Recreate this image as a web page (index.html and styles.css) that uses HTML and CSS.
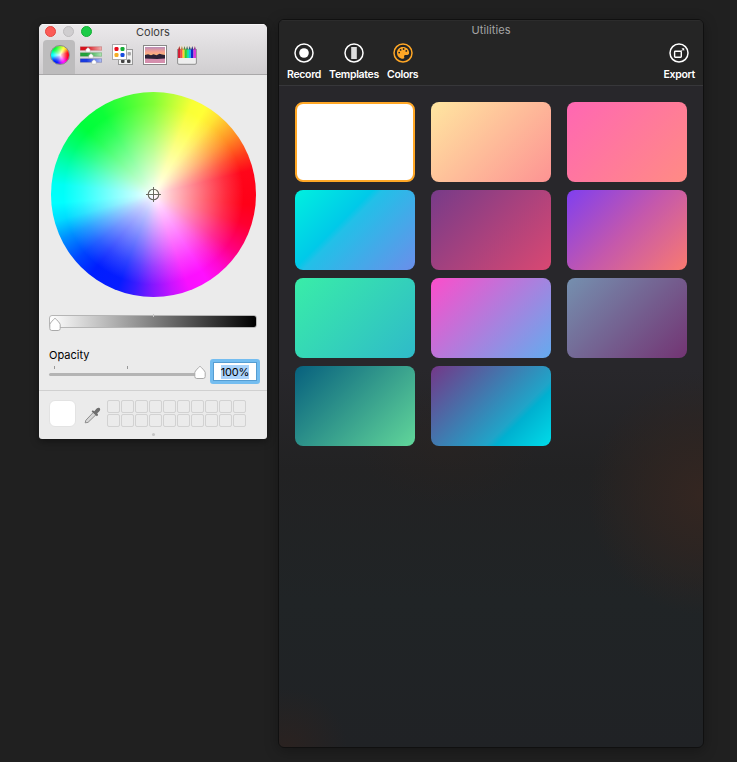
FILE: index.html
```html
<!DOCTYPE html>
<html lang="en">
<head>
<meta charset="utf-8">
<title>Utilities</title>
<link rel="stylesheet" href="styles.css">
</head>
<body>
<section class="picker">
  <header class="picker-head">
    <div class="titlebar">
      <span class="lights"><i class="light close"></i><i class="light idle"></i><i class="light zoom"></i></span>
      <span class="picker-title">Colors</span>
    </div>
    <nav class="tabs">
      <span class="tab selected"><i class="mini-wheel"></i></span>
      <span class="tab">
        <svg width="24" height="20" viewBox="0 0 24 20">
          <defs>
            <linearGradient id="red"><stop offset=".3" stop-color="#d8121d"/><stop offset="1" stop-color="#f0b4b2"/></linearGradient>
            <linearGradient id="green"><stop offset=".3" stop-color="#22a23c"/><stop offset="1" stop-color="#b4e6b8"/></linearGradient>
            <linearGradient id="blue"><stop offset=".3" stop-color="#1a3be0"/><stop offset="1" stop-color="#b4c4f6"/></linearGradient>
          </defs>
          <rect x="1.300" y="1.800" width="21.400" height="3.400" fill="url(#red)" stroke="#a33" stroke-opacity=".5" stroke-width=".6"/>
          <rect x="1.300" y="7.800" width="21.400" height="3.400" fill="url(#green)" stroke="#383" stroke-opacity=".5" stroke-width=".6"/>
          <rect x="1.300" y="13.800" width="21.400" height="3.400" fill="url(#blue)" stroke="#338" stroke-opacity=".5" stroke-width=".6"/>
          <g fill="#fff" stroke="#aaa" stroke-width=".4"><path d="M9 2.500l2.200 2v2.500H6.800V4.500z"/><path d="M12 8.500l2.200 2v2.500H9.800v-2.500z"/><path d="M15 14.500l2.200 2v2.500h-4.400v-2.500z"/></g>
        </svg>
      </span>
      <span class="tab">
        <svg width="24" height="22" viewBox="0 0 24 22">
          <rect x="7.500" y="5.500" width="14" height="15" fill="#f2f2f2" stroke="#999"/>
          <g fill="#444"><rect x="16.500" y="8" width="3.500" height="3.500" rx="1" fill="#aaa"/><rect x="10" y="15.500" width="3.500" height="3.500" rx="1"/><rect x="16" y="15.500" width="3.500" height="3.500" rx="1"/></g>
          <rect x="1.500" y=".5" width="14" height="15" fill="#fff" stroke="#aaa"/>
          <rect x="3.500" y="3" width="4" height="4" rx="1.300" fill="#e80c1c"/><rect x="9.500" y="3" width="4" height="4" rx="1.300" fill="#14ad35"/>
          <rect x="3.500" y="9" width="4" height="4" rx="1.300" fill="#f6ae25"/><rect x="9.500" y="9" width="4" height="4" rx="1.300" fill="#174bdd"/>
        </svg>
      </span>
      <span class="tab">
        <svg width="24" height="20" viewBox="0 0 24 20">
          <defs><linearGradient id="sky" x2="0" y2="1"><stop stop-color="#b98cb8"/><stop offset=".5" stop-color="#f7a18e"/><stop offset="1" stop-color="#f8c36b"/></linearGradient></defs>
          <rect x=".5" y=".5" width="23" height="19" fill="#fff" stroke="#888"/>
          <rect x="2" y="2" width="20" height="10" fill="url(#sky)"/>
          <rect x="2" y="12" width="20" height="6" fill="#d58fad"/>
          <path d="M2 10l3-.8 3 1 2.500-1 3 1 3-1.400 2.500.8 3 .4v3.400l-8 .7-12-.6z" fill="#2b2136"/>
        </svg>
      </span>
      <span class="tab">
        <svg width="20" height="20" viewBox="0 0 20 20">
          <path d="M1 .5h18V5H1z" fill="#e6e0d8"/>
          <g><path d="M1 5l1.300-4 1.300 4z" fill="#a33"/><path d="M3.600 5l1.300-4 1.300 4z" fill="#b84"/><path d="M6.200 5l1.300-4 1.300 4z" fill="#584"/><path d="M8.800 5l1.300-4 1.300 4z" fill="#476"/><path d="M11.400 5l1.300-4 1.300 4z" fill="#357"/><path d="M14 5l1.300-4 1.300 4z" fill="#338"/><path d="M16.600 5l1.300-4L19 5z" fill="#838"/></g>
          <g><rect x="1" y="4.500" width="2.600" height="9" fill="#d71c33"/><rect x="3.600" y="4.500" width="2" height="9" fill="#f34f45"/><rect x="5.600" y="4.500" width="2" height="9" fill="#ffd52b"/><rect x="7.600" y="4.500" width="2.300" height="9" fill="#35cf2c"/><rect x="9.900" y="4.500" width="2" height="9" fill="#12e59b"/><rect x="11.900" y="4.500" width="2" height="9" fill="#13baf3"/><rect x="13.900" y="4.500" width="2.600" height="9" fill="#1721c8"/><rect x="16.500" y="4.500" width="2.500" height="9" fill="#df35dd"/></g>
          <path d="M.7 13h18.600v5q0 1-1 1H1.700q-1 0-1-1z" fill="#eee"/><path d="M.6 4v14q0 1.300 1.300 1.300h16.200q1.300 0 1.300-1.300V4" fill="none" stroke="#888" stroke-width=".9"/>
        </svg>
      </span>
    </nav>
  </header>
  <div class="picker-body">
    <div class="wheel">
      <svg width="15" height="15" viewBox="0 0 15 15" fill="none" stroke="#6a6a60"><circle cx="7.500" cy="7.500" r="5.300" stroke-width="1.100"/><path d="M7.500 0v15M0 7.500h15"/></svg>
    </div>
    <div class="brightness">
      <svg class="thumb" width="14" height="15" viewBox="0 0 14 15"><path d="M7 1.200C8 2.300 12.200 6 12.200 7.500v4q0 2-2 2H3.800q-2 0-2-2v-4C1.800 6 6 2.300 7 1.200z" fill="#fff" stroke="#a9a9a9"/></svg>
    </div>
    <div class="opacity-row">
      <div class="opacity">
        <span class="opacity-label">Opacity</span>
        <div class="ticks"><i></i><i></i></div>
        <div class="track">
          <svg class="thumb" width="14" height="15" viewBox="0 0 14 15"><path d="M7 1.200C8 2.300 12.200 6 12.200 7.500v4q0 2-2 2H3.800q-2 0-2-2v-4C1.800 6 6 2.300 7 1.200z" fill="#fff" stroke="#a9a9a9"/></svg>
        </div>
      </div>
      <div class="field"><span>100%</span></div>
    </div>
  </div>
  <footer class="picker-foot">
    <div class="current"></div>
    <svg class="dropper" width="17" height="17" viewBox="0 0 17 17">
      <path d="M1.200 15.800l.6-2.500 7.600-8 2.600 2.400-8 7.700z" fill="#d6d6d6" stroke="#858585" stroke-width=".9"/>
      <path d="M7.600 4.400l1.100-1.100 1.600 1C11.800 2.300 13.200.7 14.700.8c1.400.1 1.900 1.500 1.200 2.600-.6 1-1.700 1.800-2.700 2.900l1 1.700-1.300 1.200z" fill="#6e6e6e"/>
    </svg>
    <div class="wells"><i></i><i></i><i></i><i></i><i></i><i></i><i></i><i></i><i></i><i></i><i></i><i></i><i></i><i></i><i></i><i></i><i></i><i></i><i></i><i></i></div>
    <i class="grip"></i>
  </footer>
</section>

<section class="utilities">
  <header class="util-head">
    <h1>Utilities</h1>
    <nav class="tools">
      <span class="tool record">
        <svg width="20" height="20" viewBox="0 0 20 20"><circle cx="10" cy="10" r="9" fill="none" stroke="currentColor" stroke-width="1.500"/><circle cx="10" cy="10" r="4.800" fill="currentColor"/></svg>
        <b>Record</b>
      </span>
      <span class="tool templates">
        <svg width="20" height="20" viewBox="0 0 20 20"><circle cx="10" cy="10" r="9" fill="none" stroke="currentColor" stroke-width="1.500"/><rect x="7.200" y="4" width="5.600" height="12" fill="#dcdcdc"/></svg>
        <b>Templates</b>
      </span>
      <span class="tool colors">
        <svg width="20" height="20" viewBox="0 0 20 20"><circle cx="10" cy="10" r="9" fill="none" stroke="#ffa726" stroke-width="1.500"/><path d="M9.900 4C6.400 4 4 6.500 4 9.700c0 3.500 2.700 6 6 6 1.100 0 1.500-.8 1.200-1.700-.4-1.200 0-2 1.200-2h1.700c1.400 0 2-.9 2-2.200C16.100 6.400 13.300 4 9.900 4z" fill="#ffa726"/><g fill="#252525"><circle cx="6.200" cy="9.600" r=".9"/><circle cx="7.600" cy="6.900" r=".9"/><circle cx="10.600" cy="6" r=".9"/><circle cx="13.300" cy="7.900" r=".9"/></g></svg>
        <b>Colors</b>
      </span>
      <span class="tool export">
        <svg width="20" height="20" viewBox="0 0 20 20"><circle cx="10" cy="10" r="9" fill="none" stroke="currentColor" stroke-width="1.500"/><rect x="5.600" y="8.200" width="6.700" height="6.100" rx=".7" fill="none" stroke="currentColor" stroke-width="1.400"/><path d="M12.500 5.200h2.700v2.700z" fill="currentColor"/><path d="M12.500 7.900l1.700-1.700" stroke="currentColor"/></svg>
        <b>Export</b>
      </span>
    </nav>
  </header>
  <div class="gallery">
    <div class="card white"></div><div class="card peach"></div><div class="card rose"></div>
    <div class="card aqua"></div><div class="card plum"></div><div class="card sunset"></div>
    <div class="card mint"></div><div class="card candy"></div><div class="card dusk"></div>
    <div class="card forest"></div><div class="card lagoon"></div>
  </div>
</section>
</body>
</html>
```
FILE: styles.css
```css
* { box-sizing: border-box; }
body {
  margin: 0;
  width: 737px;
  height: 762px;
  overflow: hidden;
  background: #202020;
  font-family: Inter, "Liberation Sans", sans-serif;
  font-size: 11px;
  display: flex;
  align-items: flex-start;
  gap: 11px;
  padding: 19px 0 0 39px;
}
svg { display: block; }
i { display: block; }

.picker {
  width: 228px;
  height: 415px;
  margin-top: 5px;
  border-radius: 5px 5px 3px 3px;
  overflow: hidden;
  background: #ebebeb;
  color: #000;
  box-shadow: 0 2px 9px rgba(0, 0, 0, .45);
  display: flex;
  flex-direction: column;
}
.picker-head {
  height: 51px;
  background: linear-gradient(#ebe9eb, #d0ced0);
  border-bottom: 1px solid #a9a8a9;
  box-shadow: inset 0 1px #f6f5f6;
}
.titlebar { height: 16px; display: grid; grid-template-columns: 54px 1fr 54px; align-items: center; }
.lights { display: flex; gap: 7px; padding: 0 0 1px 6px; }
.light { width: 11px; height: 11px; flex: none; border-radius: 50%; border: 1px solid; }
.close { background: #fc5b57; border-color: #e2463f; }
.idle { background: #d0ced0; border-color: #bdbbbd; }
.zoom { background: #1ccb47; border-color: #14ae35; }
.picker-title { text-align: center; line-height: 16px; color: #3c3c3c; }
.tabs { display: flex; padding-left: 4px; height: 34px; }
.tab { width: 32px; height: 34px; display: flex; align-items: center; justify-content: center; padding-bottom: 4px; }
.tab.selected { background: #bdbcbd; border-radius: 4px 4px 0 0; }
.wheel, .mini-wheel {
  border-radius: 50%;
  background:
    radial-gradient(closest-side, #fff 0, rgba(255, 255, 255, .76) 18%, rgba(255, 255, 255, .42) 48%, rgba(255, 255, 255, .17) 70%, rgba(255, 255, 255, 0) 88%),
    conic-gradient(#80ff36 0, #c4ff38 13deg, #f8ff36 23deg, #ffff36 31deg, #ffe234 39deg, #ff8c24 54deg, #ff3c1c 66deg, #ff061a 76deg, #ff0018 96deg, #ff0030 108deg, #ff0080 125deg, #ff08d0 137deg, #ff10ff 148deg, #f810ff 159deg, #c814ff 169deg, #8018ff 181deg, #3a1cff 191deg, #061cff 201deg, #001eff 218deg, #0044ff 230deg, #0090ff 244deg, #00dcff 255deg, #00ffff 265deg, #00fff4 276deg, #00ffb8 288deg, #00ff70 301deg, #00ff3c 314deg, #0cff38 328deg, #40ff36 343deg, #80ff36 360deg);
}
.mini-wheel { width: 20px; height: 20px; margin-left: 1px; border: 1px solid #8b8b8b; }

.picker-body { padding: 17px 10px 0 10px; height: 315px; }
.wheel { width: 205px; height: 205px; margin-left: 2px; display: grid; place-items: center; }
.brightness {
  position: relative;
  width: 208px;
  height: 13px;
  margin-top: 18px;
  border: 1px solid #b5b5b5;
  border-radius: 3px;
  background: linear-gradient(90deg, #fff, #000);
}
.brightness::before { content: ""; position: absolute; left: 103px; top: -2px; width: 1px; height: 3px; background: #c9c9c9; }
.thumb { position: absolute; }
.brightness .thumb { left: -2px; top: 1px; }
.opacity-row { display: flex; margin-top: 20px; }
.opacity { width: 161px; flex: none; }
.opacity-label { display: block; line-height: 14px; }
.ticks { display: flex; gap: 72px; padding: 4px 0 0 5px; }
.ticks i { width: 1px; height: 3px; background: #999; }
.track { position: relative; width: 154px; height: 3px; margin-top: 4px; border-radius: 2px; background: #b4b4b4; }
.track .thumb { left: 144px; top: -8px; }
.field {
  width: 50px;
  height: 25px;
  margin-top: 11px;
  border: 3px solid #74bdf0;
  border-radius: 3px;
  background: #fff;
  box-shadow: inset 0 0 0 1px #559dd2;
  display: flex;
  align-items: center;
  justify-content: center;
  flex: none;
}
.field span { background: #aad3fb; line-height: 14px; letter-spacing: -.2px; }

.picker-foot {
  position: relative;
  height: 49px;
  border-top: 1px solid #d0d0d0;
  display: flex;
  align-items: flex-start;
  padding: 9px 0 0 10px;
}
.current { width: 27px; height: 27px; border: 1px solid #e3e3e3; border-radius: 6px; background: #fff; }
.dropper { margin: 7px 0 0 8px; }
.wells { display: grid; grid-template-columns: repeat(10, 13px); gap: 1px; margin-left: 6px; }
.wells i { height: 13px; border: 1px solid #d2d2d2; border-radius: 2px; }
.grip { position: absolute; left: 113px; bottom: 3px; width: 3px; height: 3px; border-radius: 50%; background: #c5c5c5; }

.utilities {
  width: 426px;
  height: 729px;
  border: 1px solid #101010;
  border-radius: 6px;
  overflow: hidden;
  background:
    radial-gradient(ellipse 115px 120px at 424px 475px, #342621, rgba(48, 37, 33, .75) 45%, transparent),
    radial-gradient(ellipse 90px 60px at 170px 425px, rgba(43, 35, 31, .45), transparent),
    radial-gradient(ellipse 60px 60px at 8px 728px, rgba(49, 34, 29, .6), transparent),
    linear-gradient(#28272b 0, #28272b 48%, #222223 62%, #202426 80%, #202225 100%);
  box-shadow: 0 3px 14px rgba(0, 0, 0, .3);
}
.util-head { height: 66px; background: #252525; border-bottom: 1px solid #37373a; box-shadow: inset 0 1px #2c2c2c; }
h1 { margin: 0; font-size: 11px; letter-spacing: .1px; font-weight: 400; line-height: 21px; text-align: center; color: #a6a6a6; }
.tools { display: flex; gap: 8px; padding: 2px 8px 0; color: #fff; }
.tool { display: flex; flex-direction: column; align-items: center; }
.tool b { font-size: 10.500px; line-height: 14px; margin-top: 5px; font-weight: 600; letter-spacing: -.31px; }
.export { margin-left: auto; }
.gallery { display: grid; grid-template-columns: repeat(3, 120px); gap: 8px 16px; padding: 16px; }
.card { height: 80px; border-radius: 8px; }
.white { background: #fff; border: 2px solid #ffa726; }
.peach { background: linear-gradient(135deg, #ffe6a0, #fd9393); }
.rose { background: linear-gradient(135deg, #ff67b3, #ff8b84); }
.aqua { background: linear-gradient(135deg, #00f0df, #00c9e9 39%, #22c0e8 44%, #6b8eea); }
.plum { background: linear-gradient(135deg, #773b89, #d94872); }
.sunset { background: linear-gradient(135deg, #7f3ff0, #c458ac 50%, #f97a70); }
.mint { background: linear-gradient(135deg, #39eda8, #2fbac9); }
.candy { background: linear-gradient(135deg, #fc4ecb, #64abee); }
.dusk { background: linear-gradient(135deg, #7590af, #733473); }
.forest { background: linear-gradient(135deg, #07607e, #61d69a); }
.lagoon { background: linear-gradient(135deg, #743788, #20a4c8 67%, #00b0d0 72%, #00dce9); }
```
